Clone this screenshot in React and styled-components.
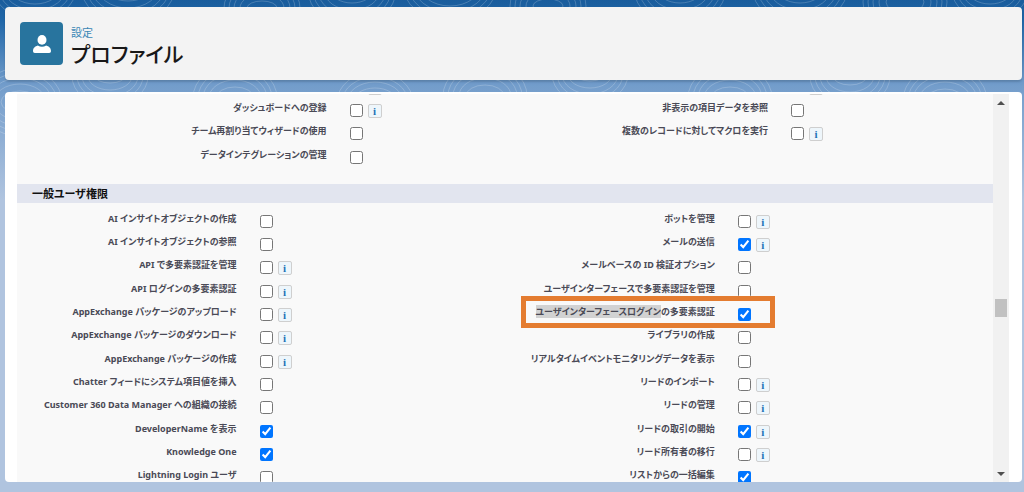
import React from "react";
import styled, { createGlobalStyle } from "styled-components";

const GlobalStyle = createGlobalStyle`
  * {
    box-sizing: border-box;
  }

  body {
    margin: 0;
    font-family: "Noto Sans", "Noto Sans CJK JP", sans-serif;
  }
`;

const Page = styled.div`
  position: relative;
  height: 100vh;
  display: flex;
  flex-direction: column;
  gap: 12px;
  padding: 7px 2px 10px 5px;
  overflow: hidden;
  background: #b0c4df
    linear-gradient(#195c9c 0, #1f66a8 20px, #739dcb 86px, #b0c4df 200px)
    no-repeat;
`;

const Contours = styled.svg`
  position: absolute;
  inset: 0;
  width: 100%;
  height: 200px;
  fill: none;
  stroke: #ffffff;
  stroke-opacity: 0.2;
`;

const PageHeader = styled.header`
  position: relative;
  display: flex;
  align-items: flex-start;
  gap: 8px;
  padding: 15px;
  border-radius: 4px;
  background: #f3f3f3;
  box-shadow: 0 2px 2px rgba(0, 0, 0, 0.15);
`;

const HeaderIcon = styled.span`
  width: 43px;
  height: 43px;
  display: flex;
  align-items: center;
  justify-content: center;
  border-radius: 4px;
  background: #28749e;
`;

const HeaderText = styled.div`
  font-family: "Noto Sans CJK JP", sans-serif;
  font-feature-settings: "palt";

  & p {
    margin: 0;
    font-size: 11px;
    line-height: 20px;
    color: #3a86b5;
  }

  & h1 {
    margin: 0;
    font-size: 21px;
    font-weight: 500;
    line-height: 23px;
    color: #181818;
  }
`;

const Panel = styled.main`
  position: relative;
  flex: 1;
  min-height: 0;
  display: flex;
  padding: 2px 13px 0 12px;
  border-radius: 4px;
  overflow: hidden;
  background: white;
`;

const ScrollArea = styled.div`
  flex: 1;
  overflow: hidden;
  background: #f9f9f9;
`;

const ScrollContent = styled.div`
  margin-top: -21px;
`;

const Section = styled.section`
  display: flex;
  padding-bottom: ${(props) => (props.$spaced ? "18px" : "0")};
`;

const SectionTitle = styled.h2`
  margin: 0 0 4px;
  padding-left: 15px;
  font-size: 11px;
  line-height: 19px;
  font-feature-settings: "palt";
  color: #111111;
  background: #e2e5ef;
`;

const Column = styled.div`
  flex: 0 0 ${(props) => props.$width};
`;

const Row = styled.div`
  position: relative;
  height: 23px;
  display: flex;
  align-items: flex-start;

  &:nth-child(3n) {
    height: 24px;
  }
`;

const Label = styled.label`
  flex: 0 0 ${(props) => props.$width};
  text-align: right;
  white-space: nowrap;
  font-size: 9px;
  font-weight: 700;
  line-height: 24px;
  font-feature-settings: "palt";
  color: #4a4a56;
`;

const Selected = styled.span`
  background: #d2d2d2;
`;

const Checkbox = styled.input`
  width: 13px;
  height: 13px;
  margin: 8px 5px 0 23px;
`;

const InfoButton = styled.button`
  width: 14px;
  height: 14px;
  margin-top: 8px;
  padding: 0;
  border: 1px solid #cfcfcf;
  border-radius: 2px;
  background: #eef6fb;
  font-family: "Liberation Serif", serif;
  font-size: 11px;
  font-weight: 700;
  line-height: 12px;
  color: #1f73b7;
`;

const InfoEdge = styled(InfoButton)`
  margin-left: 41px;
`;

const Callout = styled.div`
  position: absolute;
  top: -4px;
  bottom: -5px;
  left: 16px;
  width: 52%;
  z-index: 1;
  border: 5px solid #e47c30;
  pointer-events: none;
`;

const Scrollbar = styled.div`
  width: 16px;
  display: flex;
  flex-direction: column;
  align-items: center;
  background: #f1f1f1;
`;

const ScrollArrow = styled.button`
  height: 17px;
  width: 16px;
  padding: 0;
  display: flex;
  align-items: center;
  justify-content: center;
  border: 0;
  background: none;
`;

const Track = styled.div`
  flex: ${(props) => props.$grow};
`;

const Thumb = styled.div`
  width: 12px;
  height: 18px;
  background: #c1c1c1;
`;

const rings = [
  [35, -14, 34],
  [128, -16, 40],
  [262, 8, 30],
  [352, -10, 36],
  [450, -18, 40],
  [548, 6, 30],
  [680, -12, 38],
  [800, -14, 40],
  [905, 2, 34],
  [990, -10, 30],
  [20, 102, 34],
  [110, 76, 30],
  [235, 98, 34],
  [375, 102, 30],
  [485, 96, 34],
  [590, 74, 30],
  [730, 98, 34],
  [850, 76, 32],
  [945, 100, 34],
];

const dashboardRows = [
  [
    { label: "ダッシュボードへの登録", info: true },
    { label: "チーム再割り当てウィザードの使用" },
    { label: "データインテグレーションの管理" },
  ],
  [
    { label: "非表示の項目データを参照" },
    { label: "複数のレコードに対してマクロを実行", info: true },
  ],
];

const generalRows = [
  [
    { label: "AI インサイトオブジェクトの作成" },
    { label: "AI インサイトオブジェクトの参照" },
    { label: "API で多要素認証を管理", info: true },
    { label: "API ログインの多要素認証", info: true },
    { label: "AppExchange パッケージのアップロード", info: true },
    { label: "AppExchange パッケージのダウンロード", info: true },
    { label: "AppExchange パッケージの作成", info: true },
    { label: "Chatter フィードにシステム項目値を挿入" },
    { label: "Customer 360 Data Manager への組織の接続" },
    { label: "DeveloperName を表示", checked: true },
    { label: "Knowledge One", checked: true },
    { label: "Lightning Login ユーザ" },
  ],
  [
    { label: "ボットを管理", info: true },
    { label: "メールの送信", checked: true, info: true },
    { label: "メールベースの ID 検証オプション" },
    { label: "ユーザインターフェースで多要素認証を管理" },
    {
      selected: "ユーザインターフェースログイン",
      label: "の多要素認証",
      checked: true,
      callout: true,
    },
    { label: "ライブラリの作成" },
    { label: "リアルタイムイベントモニタリングデータを表示" },
    { label: "リードのインポート", info: true },
    { label: "リードの管理", info: true },
    { label: "リードの取引の開始", checked: true, info: true },
    { label: "リード所有者の移行", info: true },
    { label: "リストからの一括編集", checked: true },
  ],
];

const Permission = ({ id, item, labelWidth }) => (
  <Row>
    <Label htmlFor={id} $width={labelWidth}>
      {item.selected && <Selected>{item.selected}</Selected>}
      {item.label}
    </Label>
    <Checkbox id={id} type="checkbox" defaultChecked={item.checked} />
    {item.info && <InfoButton type="button">i</InfoButton>}
    {item.callout && <Callout />}
  </Row>
);

const PermissionColumn = ({ name, width, labelWidth, items, children }) => (
  <Column $width={width}>
    {children}
    {items.map((item, i) => (
      <Permission
        key={item.label}
        id={`${name}-${i}`}
        item={item}
        labelWidth={labelWidth}
      />
    ))}
  </Column>
);

// bottom edge of the row that is scrolled out above the list
const ScrolledRow = ({ labelWidth }) => (
  <Row>
    <Label as="span" $width={labelWidth} />
    <InfoEdge type="button" tabIndex={-1} />
  </Row>
);

const App = () => {
  return (
    <>
      <GlobalStyle />
      <Page>
        <Contours>
          {rings.map(([x, y, r]) =>
            [0, 5, 10, 16, 23].map((d) => (
              <ellipse key={`${x}-${d}`} cx={x} cy={y} rx={r + 8 - d} ry={r - d} />
            ))
          )}
        </Contours>
        <PageHeader>
          <HeaderIcon>
            <svg width="18" height="18" viewBox="0 0 18 18" fill="white">
              <ellipse cx="9" cy="4.9" rx="4.5" ry="4.9" />
              <path d="M0 16.2C0 12.8 2.2 11.6 4.8 10.6Q9 13 13.2 10.6C15.8 11.6 18 12.8 18 16.2Q18 18 16.2 18H1.8Q0 18 0 16.2Z" />
            </svg>
          </HeaderIcon>
          <HeaderText>
            <p>設定</p>
            <h1>プロファイル</h1>
          </HeaderText>
        </PageHeader>
        <Panel>
          <ScrollArea>
            <ScrollContent>
              <Section $spaced>
                <PermissionColumn
                  name="dashboard-left"
                  width="52%"
                  labelWidth="61%"
                  items={dashboardRows[0]}
                >
                  <ScrolledRow labelWidth="61%" />
                </PermissionColumn>
                <PermissionColumn
                  name="dashboard-right"
                  width="48%"
                  labelWidth="52%"
                  items={dashboardRows[1]}
                >
                  <ScrolledRow labelWidth="52%" />
                </PermissionColumn>
              </Section>
              <SectionTitle>一般ユーザ権限</SectionTitle>
              <Section>
                <PermissionColumn
                  name="general-left"
                  width="50%"
                  labelWidth="45%"
                  items={generalRows[0]}
                />
                <PermissionColumn
                  name="general-right"
                  width="50%"
                  labelWidth="43%"
                  items={generalRows[1]}
                />
              </Section>
            </ScrollContent>
          </ScrollArea>
          <Scrollbar>
            <ScrollArrow type="button" aria-label="上へ">
              <svg width="8" height="4" fill="#505050">
                <path d="M0 4L4 0L8 4Z" />
              </svg>
            </ScrollArrow>
            <Track $grow={19} />
            <Thumb />
            <Track $grow={15} />
            <ScrollArrow type="button" aria-label="下へ">
              <svg width="8" height="4" fill="#505050">
                <path d="M0 0H8L4 4Z" />
              </svg>
            </ScrollArrow>
          </Scrollbar>
        </Panel>
      </Page>
    </>
  );
};

export default App;
